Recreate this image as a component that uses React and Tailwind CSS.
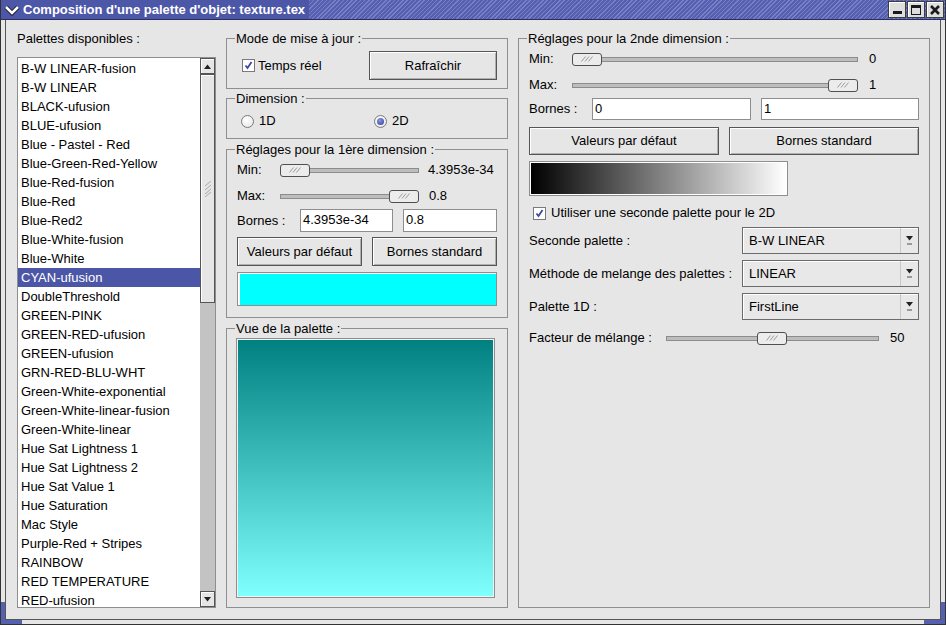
import React from 'react';

const palettes = [
  'B-W LINEAR-fusion',
  'B-W LINEAR',
  'BLACK-ufusion',
  'BLUE-ufusion',
  'Blue - Pastel - Red',
  'Blue-Green-Red-Yellow',
  'Blue-Red-fusion',
  'Blue-Red',
  'Blue-Red2',
  'Blue-White-fusion',
  'Blue-White',
  'CYAN-ufusion',
  'DoubleThreshold',
  'GREEN-PINK',
  'GREEN-RED-ufusion',
  'GREEN-ufusion',
  'GRN-RED-BLU-WHT',
  'Green-White-exponential',
  'Green-White-linear-fusion',
  'Green-White-linear',
  'Hue Sat Lightness 1',
  'Hue Sat Lightness 2',
  'Hue Sat Value 1',
  'Hue Saturation',
  'Mac Style',
  'Purple-Red + Stripes',
  'RAINBOW',
  'RED TEMPERATURE',
  'RED-ufusion',
];

function Group({ title, className = '', children }) {
  return (
    <fieldset className={`min-w-0 border border-[#8f8f8f] ${className}`}>
      <legend className="ml-[8px] px-[1px] leading-[15px]">{title}</legend>
      {children}
    </fieldset>
  );
}

function Grip() {
  return (
    <svg width="12" height="6" viewBox="0 0 12 6">
      <path d="M0.5 5.5 L4.5 0.5 M4 5.5 L8 0.5 M7.5 5.5 L11.5 0.5" stroke="#9c9c9c" strokeWidth="1" fill="none" />
    </svg>
  );
}

function Slider({ className = '', thumbClass = '' }) {
  return (
    <div className={`relative h-[13px] shrink-0 ${className}`}>
      <div className="absolute left-0 right-0 top-[4px] h-[5px] border border-[#8c8c8c] bg-[#bdbdbd]" />
      <div className={`absolute top-0 flex h-[13px] w-[30px] items-center justify-center rounded-[3px] border border-[#4f4f4f] bg-[#ececec] ${thumbClass}`}>
        <Grip />
      </div>
    </div>
  );
}

function Button({ className = '', children }) {
  return (
    <div className={`flex items-center justify-center border border-[#555] bg-[#e6e6e6] shadow-[inset_1px_1px_0_#fff,inset_-1px_-1px_0_#b0b0b0] ${className}`}>
      {children}
    </div>
  );
}

function Field({ className = '', value }) {
  return (
    <div className={`h-full border border-[#8e8e8e] bg-white pl-[2px] leading-[20px] ${className}`}>{value}</div>
  );
}

function Checkbox() {
  return (
    <div className="flex h-[13px] w-[13px] shrink-0 items-center justify-center border border-[#7a7a7a] bg-white">
      <svg width="9" height="9" viewBox="0 0 9 9">
        <path d="M1.5 4.5 L3.5 7 L7.5 1" stroke="#3a48a6" strokeWidth="1.8" fill="none" />
      </svg>
    </div>
  );
}

function Radio({ checked }) {
  return (
    <div className="flex h-[13px] w-[13px] shrink-0 items-center justify-center rounded-full border border-[#7a7a7a] bg-[radial-gradient(circle_at_40%_35%,#ffffff,#e4e4e4)]">
      {checked && <div className="h-[7px] w-[7px] rounded-full bg-[radial-gradient(circle_at_40%_35%,#8a96e0,#2d3b98)]" />}
    </div>
  );
}

function Combo({ value }) {
  return (
    <div className="flex h-full w-[177px] border border-[#6b6b6b] bg-[#e8e8e8] shadow-[inset_1px_1px_0_#fff]">
      <div className="flex-1 pl-[6px] leading-[25px]">{value}</div>
      <div className="flex w-[18px] flex-col items-center justify-center gap-[2px] border-l border-[#c8c8c8]">
        <svg width="7" height="5" viewBox="0 0 7 5">
          <path d="M0 0 H7 L3.5 4.5 Z" fill="#222" />
        </svg>
        <div className="h-[2px] w-[5px] bg-[#9a9a9a]" />
      </div>
    </div>
  );
}

function ScrollArrow({ up }) {
  return (
    <div className="flex h-[16px] items-center justify-center border border-[#555] bg-[#e6e6e6] shadow-[inset_1px_1px_0_#fff]">
      <svg width="7" height="5" viewBox="0 0 7 5">
        <path d={up ? 'M0 5 H7 L3.5 0.5 Z' : 'M0 0 H7 L3.5 4.5 Z'} fill="#222" />
      </svg>
    </div>
  );
}

function TitleButton({ children }) {
  return (
    <div className="flex h-[17px] w-[18px] items-center justify-center border border-[#3c3c3c] bg-[#dedede] shadow-[inset_1px_1px_0_#fff]">
      {children}
    </div>
  );
}

export default function App() {
  return (
    <div className="relative flex h-[625px] w-[946px] flex-col overflow-hidden border-x border-b border-[#333] bg-[#e6e6e6] font-['Liberation_Sans',Arial,sans-serif] text-[13px] text-black">
      {/* Title bar */}
      <div className="flex h-[20px] shrink-0 items-stretch border-b border-[#2a2e5c] bg-[repeating-linear-gradient(135deg,#5660b0_0px,#5660b0_2px,#7880c6_2px,#7880c6_3px)]">
        <div className="flex w-[21px] items-center justify-center bg-[#4d57a7]">
          <svg width="16" height="12" viewBox="0 0 16 12">
            <path d="M2 3 L8 9 L14 3" stroke="#1c1c30" strokeWidth="4.5" fill="none" />
            <path d="M2 3 L8 9 L14 3" stroke="#fff" strokeWidth="2.5" fill="none" />
          </svg>
        </div>
        <div className="bg-[#4d57a7] pl-[1px] pr-[4px] font-bold leading-[19px] text-white">
          Composition d'une palette d'objet: texture.tex
        </div>
        <div className="flex-1" />
        <div className="flex items-center gap-[1px] pr-[1px]">
          <TitleButton>
            <div className="mt-[5px] h-[3px] w-[9px] bg-[#1a1a1a]" />
          </TitleButton>
          <TitleButton>
            <div className="h-[10px] w-[10px] border border-t-[3px] border-[#1a1a1a]" />
          </TitleButton>
          <TitleButton>
            <svg width="10" height="10" viewBox="0 0 10 10">
              <path d="M1 1 L9 9 M9 1 L1 9" stroke="#1a1a1a" strokeWidth="2.6" />
            </svg>
          </TitleButton>
        </div>
      </div>

      {/* Body */}
      <div className="mx-[4px] mb-[4px] flex flex-1 border-x border-b border-[#555] pb-[10px] pl-[11px] pr-[10px] pt-[11px]">
        {/* Palette list */}
        <div className="flex w-[199px] shrink-0 flex-col">
          <div className="leading-[15px]">Palettes disponibles :</div>
          <div className="mt-[11px] flex h-[551px] border border-[#8e8e8e] bg-white">
            <div className="flex-1 overflow-hidden pt-[1px]">
              {palettes.map((p) => (
                <div
                  key={p}
                  className={`h-[19px] whitespace-nowrap pl-[3px] leading-[19px] ${p === 'CYAN-ufusion' ? 'bg-[#4b56a6] text-white' : ''}`}
                >
                  {p}
                </div>
              ))}
            </div>
            <div className="flex w-[15px] flex-col bg-[#c3c3c3]">
              <ScrollArrow up />
              <div className="flex h-[229px] items-center justify-center border border-[#555] bg-[#e6e6e6] shadow-[inset_1px_1px_0_#fff]">
                <svg width="8" height="16" viewBox="0 0 8 16">
                  <path d="M1 5 L7 0 M1 9 L7 4 M1 13 L7 8 M1 16 L7 11" stroke="#a8a8a8" strokeWidth="1" />
                </svg>
              </div>
              <div className="flex-1" />
              <ScrollArrow />
            </div>
          </div>
        </div>

        {/* Middle column */}
        <div className="ml-[10px] flex w-[282px] shrink-0 flex-col">
          <Group title="Mode de mise à jour :" className="h-[58px]">
            <div className="mt-[5px] flex h-[29px] items-center justify-between px-[10px]">
              <div className="ml-[5px] flex items-center gap-[3px]">
                <Checkbox />
                <span>Temps réel</span>
              </div>
              <Button className="h-[29px] w-[128px]">Rafraîchir</Button>
            </div>
          </Group>

          <Group title="Dimension :" className="mt-[2px] h-[48px]">
            <div className="mt-[5px] flex h-[20px] items-center px-[10px]">
              <div className="ml-[4px] flex w-[133px] items-center gap-[5px]">
                <Radio />
                <span>1D</span>
              </div>
              <div className="flex items-center gap-[5px]">
                <Radio checked />
                <span>2D</span>
              </div>
            </div>
          </Group>

          <Group title="Réglages pour la 1ère dimension :" className="mt-[3px] h-[176px]">
            <div className="flex flex-col px-[10px]">
              <div className="mt-[5px] flex h-[16px] items-center">
                <span className="w-[43px]">Min:</span>
                <Slider className="w-[139px]" thumbClass="left-0" />
                <span className="ml-[9px]">4.3953e-34</span>
              </div>
              <div className="mt-[10px] flex h-[16px] items-center">
                <span className="w-[43px]">Max:</span>
                <Slider className="w-[139px]" thumbClass="right-0" />
                <span className="ml-[10px]">0.8</span>
              </div>
              <div className="mt-[5px] flex h-[23px] items-center">
                <span className="w-[63px]">Bornes :</span>
                <Field className="w-[93px]" value="4.3953e-34" />
                <Field className="ml-[10px] w-[94px]" value="0.8" />
              </div>
              <div className="mt-[5px] flex h-[29px] gap-[10px]">
                <Button className="w-[125px]">Valeurs par défaut</Button>
                <Button className="w-[125px]">Bornes standard</Button>
              </div>
              <div className="mt-[6px] h-[34px] w-[260px] border border-[#8e8e8e] bg-white pl-[2px] pt-[1px]">
                <div className="h-full w-full bg-[#00ffff]" />
              </div>
            </div>
          </Group>

          <Group title="Vue de la palette :" className="mt-[3px] h-[287px]">
            <div className="ml-[9px] mt-[2px] h-[260px] w-[259px] border border-[#8e8e8e] bg-[#f2f2f2] p-[1px]">
              <div className="h-full w-full bg-[linear-gradient(to_bottom,#008080,#80ffff)]" />
            </div>
          </Group>
        </div>

        {/* Right column */}
        <Group title="Réglages pour la 2nde dimension :" className="ml-[10px] h-[577px] w-[412px] shrink-0">
          <div className="flex flex-col px-[10px]">
            <div className="mt-[5px] flex h-[16px] items-center">
              <span className="w-[43px]">Min:</span>
              <Slider className="w-[286px]" thumbClass="left-0" />
              <span className="ml-[11px]">0</span>
            </div>
            <div className="mt-[10px] flex h-[16px] items-center">
              <span className="w-[43px]">Max:</span>
              <Slider className="w-[286px]" thumbClass="right-0" />
              <span className="ml-[11px]">1</span>
            </div>
            <div className="mt-[5px] flex h-[22px] items-center">
              <span className="w-[63px]">Bornes :</span>
              <Field className="w-[159px]" value="0" />
              <Field className="ml-[10px] w-[158px]" value="1" />
            </div>
            <div className="mt-[7px] flex h-[28px] gap-[10px]">
              <Button className="w-[190px]">Valeurs par défaut</Button>
              <Button className="w-[190px]">Bornes standard</Button>
            </div>
            <div className="mt-[6px] h-[35px] w-[259px] border border-[#8e8e8e] bg-white p-[1px]">
              <div className="h-full w-full bg-[linear-gradient(to_right,#000,#fff)]" />
            </div>
            <div className="mt-[9px] flex h-[16px] items-center gap-[5px] pl-[4px]">
              <Checkbox />
              <span>Utiliser une seconde palette pour le 2D</span>
            </div>
            <div className="mt-[6px] flex h-[27px] items-center justify-between">
              <span>Seconde palette :</span>
              <Combo value="B-W LINEAR" />
            </div>
            <div className="mt-[6px] flex h-[27px] items-center justify-between">
              <span>Méthode de melange des palettes :</span>
              <Combo value="LINEAR" />
            </div>
            <div className="mt-[6px] flex h-[27px] items-center justify-between">
              <span>Palette 1D :</span>
              <Combo value="FirstLine" />
            </div>
            <div className="mt-[10px] flex h-[16px] items-center">
              <span className="w-[137px]">Facteur de mélange :</span>
              <Slider className="w-[213px]" thumbClass="left-[91px]" />
              <span className="ml-[11px]">50</span>
            </div>
          </div>
        </Group>
      </div>

      {/* Resize corners */}
      <div className="absolute bottom-[2px] left-0 h-[20px] w-[4px] bg-[#5660b0]" />
      <div className="absolute bottom-0 left-0 h-[4px] w-[21px] bg-[#5660b0]" />
      <div className="absolute bottom-[2px] right-0 h-[20px] w-[4px] bg-[#5660b0]" />
      <div className="absolute bottom-0 right-0 h-[4px] w-[21px] bg-[#5660b0]" />
    </div>
  );
}
